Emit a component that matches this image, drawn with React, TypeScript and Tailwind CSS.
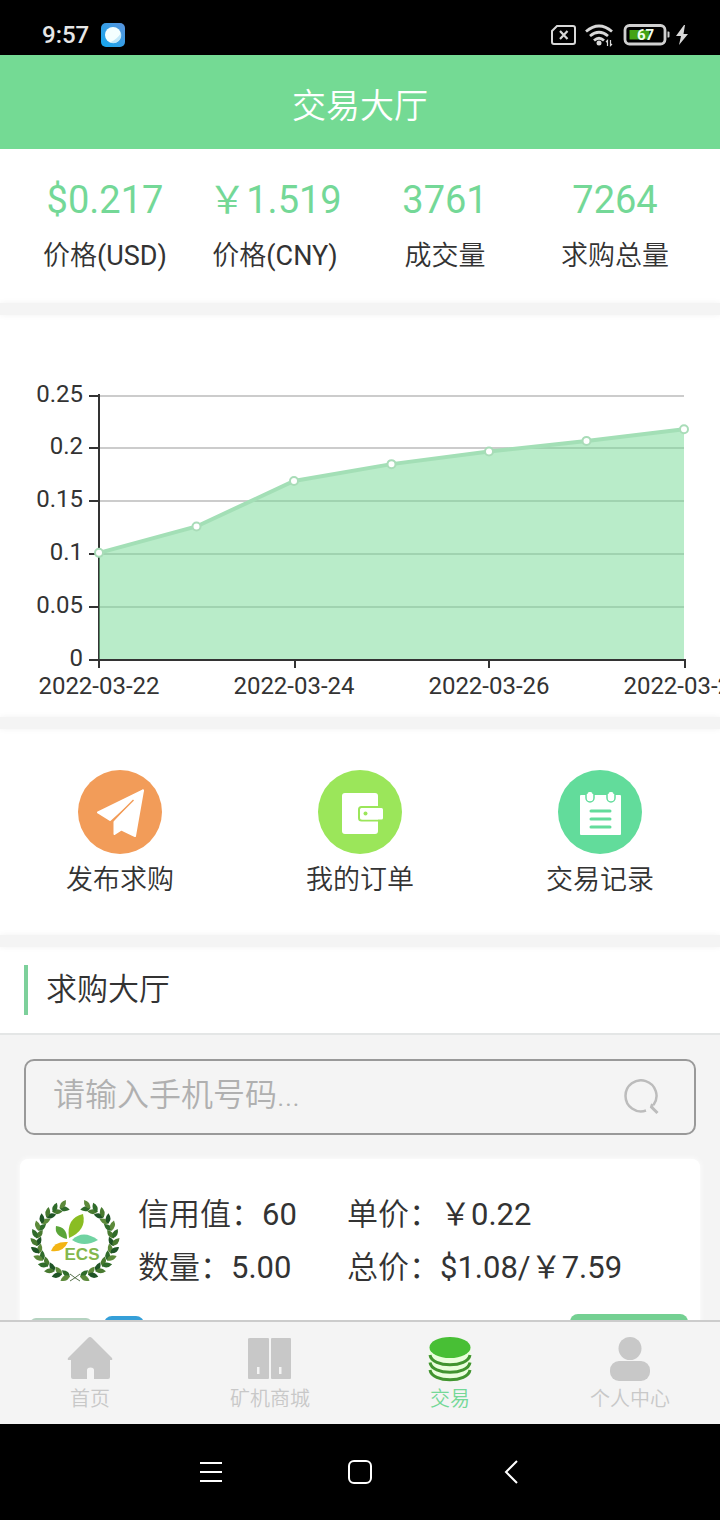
import type { ReactNode } from 'react'

const stats = [
  { value: '$0.217', label: '价格', unit: '(USD)' },
  { value: '￥1.519', label: '价格', unit: '(CNY)' },
  { value: '3761', label: '成交量' },
  { value: '7264', label: '求购总量' },
]

const prices = [0.101, 0.126, 0.169, 0.185, 0.197, 0.207, 0.218]
const yLabels = ['0', '0.05', '0.1', '0.15', '0.2', '0.25']
const xLabels = ['2022-03-22', '2022-03-24', '2022-03-26', '2022-03-28']

function StatusBar() {
  return (
    <div className="flex h-[55px] shrink-0 items-center justify-between bg-black pt-[14px] pr-8 pl-[42px] text-[#e6e6e6]">
      <div className="flex items-center gap-3">
        <span className="text-2xl leading-8 font-medium">9:57</span>
        <svg className="h-6 w-6" viewBox="0 0 24 24" aria-hidden="true">
          <defs>
            <linearGradient id="app" x1="0" y1="1" x2="1" y2="0">
              <stop offset="0" stopColor="#12a8ee" />
              <stop offset="1" stopColor="#5b93dc" />
            </linearGradient>
          </defs>
          <rect width="24" height="24" rx="5" fill="url(#app)" />
          <circle cx="12" cy="12" r="8" fill="#f4ffff" />
          <path d="M20 10A8 8 0 0 1 9 19.400C13.500 17.500 17.500 14 20 10Z" fill="#c3e9fa" />
        </svg>
      </div>
      <div className="flex items-center gap-[6px]">
        <svg className="h-6 w-7" viewBox="0 0 28 24" fill="none" stroke="#d8d8d8" strokeWidth="2" aria-hidden="true">
          <path d="M6 3H22Q24 3 24 5V19Q24 21 22 21H3Q1 21 1 19V8Z" />
          <path d="M9 8L16.500 16M16.500 8L9 16" strokeWidth="2.200" />
        </svg>
        <svg className="h-6 w-7" viewBox="0 0 28 24" fill="none" stroke="#d8d8d8" strokeWidth="2.800" aria-hidden="true">
          <path d="M1 8.500Q14 -2.500 27 8.500M5 13Q14 5.500 23 13M9 17.500Q14 13 19 17.500" />
          <circle cx="14" cy="20" r="2.500" fill="#d8d8d8" stroke="none" />
          <path d="M22.500 23V17.500L21 19M25.500 17V22.500L27 21" strokeWidth="1.200" />
        </svg>
        <svg className="ml-1 h-6 w-[47px]" viewBox="0 0 47 24" aria-hidden="true">
          <rect x="2" y="2.500" width="40" height="18.500" rx="4.500" fill="none" stroke="#d0d0d0" strokeWidth="2.800" />
          <rect x="6.500" y="7" width="20" height="9.500" fill="#43a316" />
          <path d="M44.500 8.500h1q1 0 1 1v4q0 1 -1 1H44.500Z" fill="#d0d0d0" />
          <text x="22.500" y="17" textAnchor="middle" fontSize="15" fontWeight="700" fill="#f2fff0">67</text>
        </svg>
        <svg className="h-6 w-3" viewBox="0 0 12 24" aria-hidden="true">
          <path d="M8 2L0 13H5L3 22L12 11H7.500L9 2Z" fill="#d8d8d8" />
        </svg>
      </div>
    </div>
  )
}

function PriceChart() {
  const points = prices.map((p, i) => ({ x: 99 + i * 97.5, y: 344.5 - p * 1056 }))
  const line = points.map((p) => `${p.x},${p.y}`).join(' ')

  return (
    <svg className="block w-full" viewBox="0 0 720 402" role="img" aria-label="价格">
      {yLabels.map((label, i) => {
        const y = Math.round(344.5 - i * 52.8)
        return (
          <g key={label}>
            <path d={`M99 ${y}H684`} stroke="#cccccc" strokeWidth="2" />
            <path d={`M89 ${y}H99`} stroke="#333333" strokeWidth="2" />
            <text x="83" y={y + 6} textAnchor="end" fontSize="24" fill="#333333">{label}</text>
          </g>
        )
      })}
      <path d="M99 79V353M89 345H685M295 345V353M489 345V353M685 344V353" stroke="#333333" strokeWidth="2" fill="none" />
      <polygon points={`99,344 ${line} 684,344`} fill="#74da94" fillOpacity="0.5" />
      <polyline points={line} fill="none" stroke="#a3dfb6" strokeWidth="4" />
      {points.map((p) => (
        <circle key={p.x} cx={p.x} cy={p.y} r="4" fill="#fff" stroke="#a9dcb8" strokeWidth="2" />
      ))}
      {xLabels.map((label, i) => (
        <text key={label} x={99 + i * 195} y="379" textAnchor="middle" fontSize="24" fill="#333333">{label}</text>
      ))}
    </svg>
  )
}

function Divider() {
  return <div className="relative h-3 shrink-0 bg-[#f4f4f4] shadow-[0_0_6px_#f2f2f2]" />
}

function Action({ label, children }: { label: string; children: ReactNode }) {
  return (
    <button type="button" className="flex flex-col items-center">
      <svg className="h-[84px] w-[84px]" viewBox="0 0 84 84" aria-hidden="true">
        {children}
      </svg>
      <span className="text-[27px] leading-[52px] font-[350]">{label}</span>
    </button>
  )
}

function Field({ label, value }: { label: string; value: string }) {
  return (
    <p>
      <span className="font-[350]">{label}：</span>
      {value}
    </p>
  )
}

const leafColors = ['#2f6b2a', '#5c8a3a', '#1f5426', '#487a30']

function EcsLogo() {
  const leaves: ReactNode[] = []
  for (let i = 0; i < 13; i++) {
    // from the bottom stem up to the gap at the top, mirrored on both sides
    const a = ((9 + i * 12.4) * Math.PI) / 180
    const x = 38.5 * Math.sin(a)
    const y = 36 * Math.cos(a)
    const dir = (Math.atan2(-36 * Math.sin(a), 38.5 * Math.cos(a)) * 180) / Math.PI
    for (const side of [-1, 1]) {
      for (const turn of [-34, 34]) {
        leaves.push(
          <path
            key={`${i}${side}${turn}`}
            d="M-1 0Q3 -5.500 9.500 0Q4 4.500 -1 0Z"
            fill={leafColors[(i + (turn > 0 ? 1 : 0)) % 4]}
            transform={`translate(45 42) scale(${side} 1) translate(${x} ${y}) rotate(${dir + turn})`}
          />
        )
      }
    }
  }

  return (
    <svg className="h-[84px] w-[90px] shrink-0" viewBox="0 0 90 84" role="img" aria-label="ECS">
      {leaves}
      <path d="M40 82Q45 79 50 75M50 82Q45 79 40 75" stroke="#55704a" strokeWidth="1" fill="none" />
      <path d="M39 39Q36 19 53 15Q57 31 39 39Z" fill="#8abd22" />
      <path d="M37 40Q24 37 26 27Q37 28 37 40Z" fill="#5aa538" />
      <path d="M42 41Q53 30 68 41Q54 49 42 41Z" fill="#70d3a2" />
      <path d="M38 43Q24 42 21 52Q33 54 38 43Z" fill="#f3b414" />
      <text x="52" y="61" textAnchor="middle" fontSize="17" fontWeight="700" fontFamily="Liberation Sans, sans-serif" fill="#83b74c">ECS</text>
    </svg>
  )
}

function Tab({ label, active, children }: { label: string; active?: boolean; children: ReactNode }) {
  return (
    <a
      href="#"
      aria-current={active ? 'page' : undefined}
      className={`flex flex-1 flex-col items-center pt-[14px] pb-2 ${active ? 'text-[#74d897]' : 'text-[#c8c8c8]'}`}
    >
      <svg className="h-[46px] w-[46px]" viewBox="0 0 46 46" fill="currentColor" aria-hidden="true">
        {children}
      </svg>
      <span className="text-xl leading-[34px] font-[350]">{label}</span>
    </a>
  )
}

export default function App() {
  return (
    <div className="flex h-screen flex-col bg-[#f4f4f4] font-[Roboto,'Noto_Sans_CJK_SC',sans-serif] text-[#333333]">
      <StatusBar />

      <header className="flex h-[94px] shrink-0 items-center justify-center bg-[#74da94] pt-2">
        <h1 className="text-[34px] leading-[48px] font-[350] text-white">交易大厅</h1>
      </header>

      <main className="min-h-0 flex-1 overflow-y-auto [scrollbar-width:none]">
        {/* Market summary */}
        <section className="grid grid-cols-4 bg-white px-5 pt-[23px] pb-[19px] text-center">
          {stats.map((stat) => (
            <div key={stat.value}>
              <div className="text-[38px] leading-[56px] text-[#74d897]">{stat.value}</div>
              <div className="text-[27px] leading-[56px]">
                <span className="font-[350]">{stat.label}</span>
                {stat.unit}
              </div>
            </div>
          ))}
        </section>
        <Divider />

        <section className="bg-white">
          <PriceChart />
        </section>
        <Divider />

        {/* Shortcuts */}
        <section className="grid grid-cols-3 bg-white pt-[41px] pb-[29px]">
          <Action label="发布求购">
            <circle cx="42" cy="42" r="42" fill="#f29c59" />
            <g fill="#fff" stroke="#fff" strokeWidth="2" strokeLinejoin="round">
              <path d="M65 20.500L20 42.500L32 50Z" />
              <path d="M65 20.500L57 66L43.500 59.500L36.500 64V52Z" />
            </g>
            <path d="M55.500 30L33.500 52" stroke="#f29c59" strokeWidth="1.500" />
          </Action>
          <Action label="我的订单">
            <circle cx="42" cy="42" r="42" fill="#9be65a" />
            <rect x="24" y="23" width="36" height="41" rx="3" fill="#fff" />
            <path d="M60 37H43.500Q41 37 41 39.500V48Q41 50.500 43.500 50.500H60" fill="none" stroke="#9be65a" strokeWidth="2" />
            <rect x="43" y="38" width="22" height="11.500" rx="1.500" fill="#fff" />
            <circle cx="47.500" cy="43.500" r="2" fill="#9be65a" />
          </Action>
          <Action label="交易记录">
            <circle cx="42" cy="42" r="42" fill="#62dc9b" />
            <rect x="22" y="25" width="41" height="40" rx="1" fill="#fff" />
            <g fill="#fff" stroke="#62dc9b" strokeWidth="1.500">
              <path d="M28 24V28a4 4 0 0 0 8 0V24" />
              <path d="M49 24V28a4 4 0 0 0 8 0V24" />
            </g>
            <rect x="29.500" y="22" width="5" height="9" rx="2" fill="#fff" />
            <rect x="50.500" y="22" width="5" height="9" rx="2" fill="#fff" />
            <path d="M33 41H52M33 49H52M33 57H52" stroke="#62dc9b" strokeWidth="3" strokeLinecap="round" />
          </Action>
        </section>
        <Divider />

        <section>
          <div className="flex items-center border-b-2 border-[#e4e6e6] bg-white px-6 py-[18px]">
            <div className="h-[50px] w-1 bg-[#7dd09b]" />
            <h2 className="pl-[18px] text-[31px] leading-[44px] font-[350]">求购大厅</h2>
          </div>

          <label className="mx-6 mt-6 flex items-center rounded-[10px] border-2 border-[#999999] py-3 pr-[34px] pl-[27px]">
            <input
              type="text"
              aria-label="手机号码"
              placeholder="请输入手机号码..."
              className="h-12 min-w-0 flex-1 bg-transparent pb-1 text-[32px] font-[350] outline-none placeholder:text-[#b0b0b0]"
            />
            <svg className="h-9 w-9" viewBox="0 0 36 36" fill="none" stroke="#bcbcbc" strokeWidth="2.500" aria-hidden="true">
              <path d="M22 31.500A15.500 15.500 0 1 1 29.500 26" />
              <path d="M28.500 25L27.500 28L33.500 34" strokeWidth="3" />
            </svg>
          </label>

          {/* Buy request */}
          <article className="mx-5 mt-6 rounded-lg bg-white pt-[29px] pr-3 pb-8 pl-[10px] shadow-[0_0_6px_#ffffff]">
            <div className="flex items-center">
              <EcsLogo />
              <div className="ml-[18px] flex flex-1 text-[31px] leading-[53px] whitespace-nowrap">
                <div className="w-[209px]">
                  <Field label="信用值" value="60" />
                  <Field label="数量" value="5.00" />
                </div>
                <div>
                  <Field label="单价" value="￥0.22" />
                  <Field label="总价" value="$1.08/￥7.59" />
                </div>
              </div>
            </div>
            <div className="mt-5 flex items-start justify-between">
              <div className="flex items-start">
                <span className="mt-1 h-8 w-[62px] rounded-md bg-[#b5d3c1]" />
                <span className="mt-[2px] ml-3 h-9 w-10 rounded-lg bg-[#359fd8]" />
              </div>
              <button type="button" aria-label="交易" className="h-12 w-[118px] rounded-lg bg-[#74d092]" />
            </div>
          </article>
        </section>
      </main>

      <nav className="relative flex shrink-0 border-t-2 border-[#cccccc] bg-[#f4f4f4]">
        <Tab label="首页">
          <path d="M23 1Q24 1 25 2L45 22Q46 24 44 24H43V41Q43 43 41 43H27V34Q27 31.500 23.500 31.500Q20 31.500 20 34V43H6Q4 43 4 41V24H2Q0 24 1 22L21 2Q22 1 23 1Z" />
        </Tab>
        <Tab label="矿机商城">
          <path d="M3 2H21Q22 2 22 3V42Q22 43 21 43H2Q1 43 1 42V3Q1 2 3 2ZM10 31V38H12.500V31ZM25 2H43Q44 2 44 3V42Q44 43 43 43H25Q24 43 24 42V3Q24 2 25 2ZM32 31V38H34.500V31Z" fillRule="evenodd" />
        </Tab>
        <Tab label="交易" active>
          <path d="M2.500 12V35C2.500 48 43.500 48 43.500 35V12Z" fill="#eaffdc" />
          <g fill="none" stroke="#41942f" strokeWidth="3">
            <path d="M3 34C5 47 41 47 43 34" />
            <path d="M3 26.500C5 39.500 41 39.500 43 26.500" />
            <path d="M3 19C5 32 41 32 43 19" />
          </g>
          <ellipse cx="23" cy="11.500" rx="20.500" ry="10.500" fill="#48bf35" />
        </Tab>
        <Tab label="个人中心">
          <circle cx="23" cy="12.500" r="11.500" />
          <rect x="3" y="25" width="40" height="20" rx="9" />
        </Tab>
      </nav>

      {/* System navigation */}
      <div className="flex h-24 shrink-0 items-center justify-center gap-[122px] bg-black text-white">
        <button type="button" aria-label="菜单">
          <svg className="h-7 w-7" viewBox="0 0 28 28" stroke="currentColor" strokeWidth="2">
            <path d="M4 5H26M4 14H26M4 23H26" />
          </svg>
        </button>
        <button type="button" aria-label="主屏幕">
          <svg className="h-7 w-7" viewBox="0 0 28 28" fill="none" stroke="currentColor" strokeWidth="2">
            <rect x="3" y="3" width="22" height="22" rx="5" />
          </svg>
        </button>
        <button type="button" aria-label="返回">
          <svg className="h-7 w-7" viewBox="0 0 28 28" fill="none" stroke="currentColor" strokeWidth="2">
            <path d="M21 3L10 14L21 25" />
          </svg>
        </button>
      </div>
    </div>
  )
}
